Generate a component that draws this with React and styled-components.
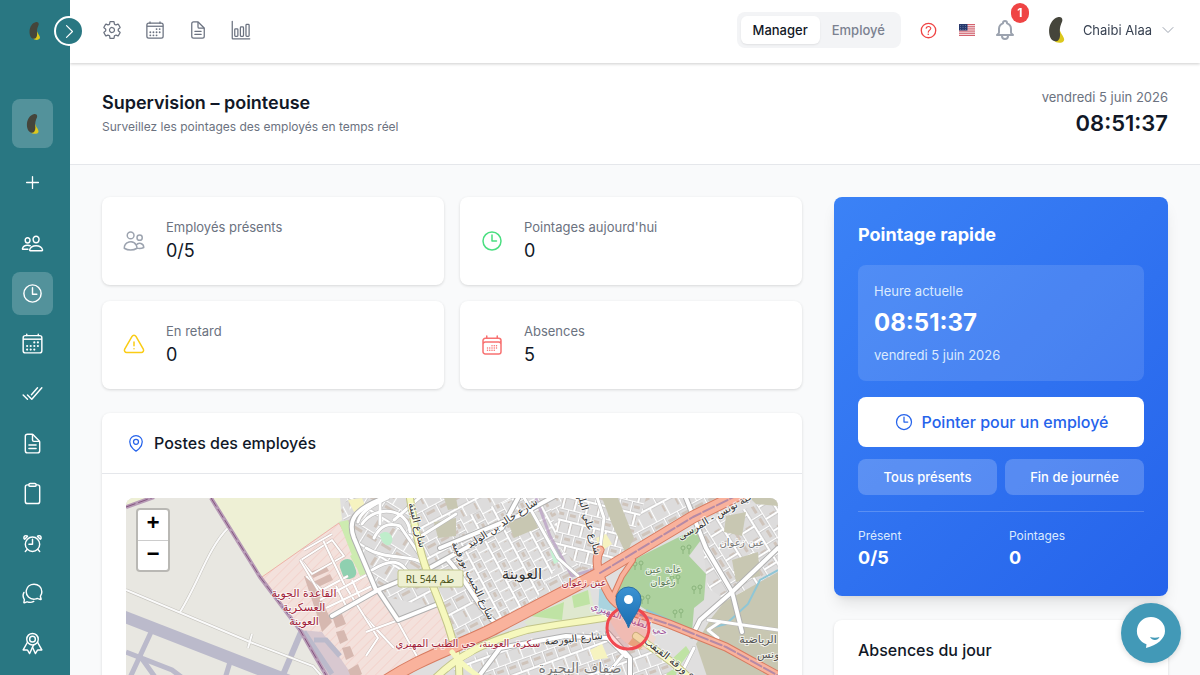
import React, { useState } from "react";
import styled, { createGlobalStyle } from "styled-components";
import {
  IoAlarmOutline,
  IoBarChartOutline,
  IoCalendarOutline,
  IoChatbubblesOutline,
  IoCheckmarkDoneOutline,
  IoClipboardOutline,
  IoDocumentTextOutline,
  IoHelpCircleOutline,
  IoPeopleOutline,
  IoRibbonOutline,
  IoSettingsOutline,
  IoTimeOutline,
  IoAddOutline,
} from "react-icons/io5";
import { HiOutlineBell } from "react-icons/hi";
import {
  HiOutlineCalendarDays,
  HiOutlineChevronDown,
  HiOutlineChevronRight,
  HiOutlineClock,
  HiOutlineExclamationTriangle,
  HiOutlineMapPin,
  HiOutlineUsers,
} from "react-icons/hi2";

const TIME = "08:51:37";
const DATE = "vendredi 5 juin 2026";

const sideLinks = [
  { label: "Présence", icon: IoTimeOutline, active: true },
  { label: "Calendrier", icon: IoCalendarOutline },
  { label: "Validations", icon: IoCheckmarkDoneOutline },
  { label: "Documents", icon: IoDocumentTextOutline },
  { label: "Tâches", icon: IoClipboardOutline },
  { label: "Rappels", icon: IoAlarmOutline },
  { label: "Messages", icon: IoChatbubblesOutline },
  { label: "Récompenses", icon: IoRibbonOutline },
];

const topLinks = [
  { label: "Paramètres", icon: IoSettingsOutline },
  { label: "Calendrier", icon: IoCalendarOutline },
  { label: "Documents", icon: IoDocumentTextOutline },
  { label: "Statistiques", icon: IoBarChartOutline },
];

const stats = [
  { label: "Employés présents", value: "0/5", icon: HiOutlineUsers, color: "#9ca3af" },
  { label: "Pointages aujourd'hui", value: "0", icon: HiOutlineClock, color: "#4ade80" },
  { label: "En retard", value: "0", icon: HiOutlineExclamationTriangle, color: "#facc15" },
  { label: "Absences", value: "5", icon: HiOutlineCalendarDays, color: "#f87171" },
];

const Seed = ({ height }) => (
  <svg width={height} height={height} viewBox="-15 0 76 76" aria-hidden="true">
    <path
      fill="#dcc81c"
      d="M29 40C29 52 26 64 15 69C20 78 42 78 44 67C44 57 36 53 31 38Z"
    />
    <path
      fill="#45453b"
      d="M25 1C34 -2 41 3 38 13C32 26 30 36 32 51C32 65 26 72 17 71C3 69 -1 51 0 36C2 19 12 4 25 1Z"
    />
  </svg>
);

const Flag = () => (
  <svg width="16" height="12" viewBox="0 0 32 24" role="img" aria-label="English">
    <rect width="32" height="24" rx="2" fill="#f7f0f1" />
    {[0, 1, 2, 3, 4, 5, 6].map((n) => (
      <rect key={n} y={n * 3.7} width="32" height="1.8" fill="#d0525f" />
    ))}
    <rect width="17" height="13" rx="1" fill="#26396c" />
    {[3, 8, 13].map((x) => (
      <g key={x} fill="#a9b4d0">
        <circle cx={x} cy="3" r="0.8" />
        <circle cx={x} cy="7" r="0.8" />
        <circle cx={x} cy="11" r="0.8" />
      </g>
    ))}
  </svg>
);

const TopBar = () => {
  const [mode, setMode] = useState("Manager");

  return (
    <Header>
      <IconRow>
        {topLinks.map(({ label, icon: Icon }) => (
          <TopIcon type="button" key={label} aria-label={label}>
            <Icon size={20} />
          </TopIcon>
        ))}
      </IconRow>
      <HeaderRight>
        <Toggle>
          {["Manager", "Employé"].map((name) => (
            <ToggleButton
              type="button"
              key={name}
              $on={mode === name}
              onClick={() => setMode(name)}
            >
              {name}
            </ToggleButton>
          ))}
        </Toggle>
        <Tool type="button" aria-label="Aide" $color="#ef4444">
          <IoHelpCircleOutline size={21} />
        </Tool>
        <Tool type="button" aria-label="Langue">
          <Flag />
        </Tool>
        <Tool type="button" aria-label="Notifications" $color="#9ca3af">
          <HiOutlineBell size={24} />
          <Badge>1</Badge>
        </Tool>
        <Profile type="button">
          <Avatar>
            <Seed height={26} />
          </Avatar>
          <span>Chaibi Alaa</span>
          <HiOutlineChevronDown size={16} color="#9ca3af" />
        </Profile>
      </HeaderRight>
    </Header>
  );
};

const SideBar = () => (
  <Side>
    <Brand>
      <Seed height={18} />
      <Expand type="button" aria-label="Ouvrir le menu">
        <HiOutlineChevronRight size={19} />
      </Expand>
    </Brand>
    <Nav>
      <SideLink href="#accueil" aria-label="Accueil" $active $tall>
        <Seed height={20} />
      </SideLink>
      <SideLink href="#ajouter" aria-label="Ajouter" $top={13}>
        <IoAddOutline size={21} />
      </SideLink>
      <SideLink href="#equipe" aria-label="Équipe" $top={18}>
        <IoPeopleOutline size={23} />
      </SideLink>
      {sideLinks.map(({ label, icon: Icon, active }) => (
        <SideLink
          key={label}
          href={"#" + label}
          aria-label={label}
          $active={active}
          $top={7}
        >
          <Icon size={23} />
        </SideLink>
      ))}
    </Nav>
  </Side>
);

// polygons of the built-up districts, each with the direction of its streets
const districts = [
  { id: "a", angle: -28, size: 15, points: "222,0 640,0 567,24 474,76 330,150 312,110 256,98 214,14" },
  { id: "f", angle: 32, size: 17, points: "222,0 284,0 300,74 252,92 228,40" },
  { id: "b", angle: 62, size: 11, points: "330,22 420,-12 436,60 412,98 372,126 346,104" },
  { id: "c", angle: 14, size: 12, points: "436,0 520,0 500,58 458,72 428,44" },
  { id: "d", angle: -20, size: 13, points: "330,166 380,146 470,132 530,150 570,200 320,200" },
  { id: "e", angle: 58, size: 14, points: "574,26 652,0 652,76 606,106 582,90" },
];

const trunk = "M250 190C290 160 340 146 371 129L474 75L567 19L626 -10";
const branch = "M474 52C466 66 476 84 484 98C496 116 520 116 548 128L600 149L660 182";
const yellow = [
  "M283 -6C290 40 296 62 303 78C314 106 326 132 333 168L334 200",
  "M300 190C330 156 360 144 401 132C430 126 456 124 482 119",
  "M510 138L547 165L572 188",
];

const streets = [
  "M258 0C226 12 222 24 228 40L250 92",
  "M206 118L252 92L300 72L376 30L392 0",
  "M252 92L272 122L312 106",
  "M322 62C340 80 356 118 374 128",
  "M314 50L392 18L440 -8",
  "M560 0L580 50L606 94L616 134",
  "M652 50L606 94L574 122L566 138",
  "M482 135L504 160L504 190",
  "M350 182L374 150L440 138L482 140L500 158",
];

const lanes = [
  "M262 0C240 10 234 16 232 24",
  "M236 26C250 6 282 10 284 34",
  "M248 40C254 28 262 24 274 28L296 60",
  "M240 50C262 64 292 54 300 70",
  "M246 72C266 60 276 62 284 78",
  "M254 2L254 26M268 22L300 -6M292 40L330 16",
  "M396 -4L432 60L452 78",
  "M470 -4L478 20L474 50",
  "M582 122L652 132",
  "M592 140L582 132L594 124",
  "M548 190L568 150",
  "M470 190L496 158",
];

const baseStreets = [
  "M175 62L206 42L218 58L186 76Z",
  "M180 78L196 92L222 78",
  "M196 40L218 86L238 118L268 150",
  "M174 62L192 92",
  "M206 36L178 52",
  "M238 118L252 140L240 158",
  "M262 106L294 164",
  "M240 134L300 112",
  "M194 102L246 74M200 110L250 86M210 88L222 112M226 82L236 104",
];

const trees = [
  [511, 66],
  [559, 50],
  [570, 90],
  [551, 114],
  [518, 100],
  [548, 80],
];

const airLines =
  "M0 92L124 144L187 168L206 190M102 30C82 50 72 86 54 114M126 136L122 150";
const fence = "M0 9L28 -1M85 0L134 79L174 132L204 184";

const PlaceMap = () => (
  <MapSvg viewBox="0 0 652 352" preserveAspectRatio="xMidYMin slice">
    <defs>
      {districts.map(({ id, angle, size }) => (
        <pattern
          key={id}
          id={"grid-" + id}
          width={size}
          height={size * 2}
          patternUnits="userSpaceOnUse"
          patternTransform={"rotate(" + angle + ")"}
        >
          <rect width={size} height={size * 2} fill="#dddcdc" />
          <path
            d={`M3 4h${size - 6}v3H3zM4 ${size + 3}h4v${size - 8}H4z`}
            fill="#cfc4bb"
          />
          <path
            d={`M0 0H${size}M0 ${size}H${size}M0 0V${size}M${size / 2} ${size}V${size * 2}`}
            stroke="#bdbdbd"
            strokeWidth="3"
          />
          <path
            d={`M0 0H${size}M0 ${size}H${size}M0 0V${size}M${size / 2} ${size}V${size * 2}`}
            stroke="#fff"
            strokeWidth="2"
          />
        </pattern>
      ))}
      <pattern
        id="hatch"
        width="7"
        height="7"
        patternUnits="userSpaceOnUse"
        patternTransform="rotate(45)"
      >
        <rect width="7" height="7" fill="#f3e1dc" />
        <path d="M0 0V7" stroke="#f3cfc9" strokeWidth="1.5" />
      </pattern>
      <linearGradient id="pin" x1="0" y1="0" x2="0" y2="1">
        <stop offset="0" stopColor="#3b93d3" />
        <stop offset="1" stopColor="#1a6cb0" />
      </linearGradient>
    </defs>

    <rect width="652" height="352" fill="#e0dfdf" />
    {districts.map(({ id, points }) => (
      <polygon key={id} points={points} fill={`url(#grid-${id})`} />
    ))}

    <path d="M0 0H85L136 80L175 132L212 200V352H0Z" fill="#e8e7e1" />
    <path d="M0 0H28L0 9Z" fill="#eef0d5" />
    <path d="M85 0H214L216 22L136 79Z" fill="#eef0d5" />
    <path
      d="M136 79L213 25L252 96L271 122L312 107L326 140L260 178V352H212V196L175 132Z"
      fill="url(#hatch)"
      stroke="#f0b3a6"
    />
    <path d="M175 132L196 134L226 177H200Z" fill="#d8c8d0" />
    <path d="M213 24L222 22L240 76L234 78Z M224 58L230 54L240 72L234 76Z" fill="#cdebb0" />
    <rect x="215" y="61" width="14" height="20" rx="6" fill="#8fd0b0" transform="rotate(-20 222 71)" />
    <g fill="#d6b8b0">
      <path d="M184 74L200 68L203 73L187 80Z" />
      <path d="M187 84L204 76L207 82L190 90Z" />
      <path d="M178 78L184 78L206 124L196 134L192 120Z" />
      <path d="M206 118L216 116L220 126L210 130Z" />
      <path d="M210 134L218 132L222 142L214 146Z" />
      <path d="M216 150L224 148L228 158L220 162Z" />
      <path d="M222 172L232 166L236 176L226 182Z" />
    </g>
    {baseStreets.map((d) => (
      <g key={d} fill="none" strokeLinejoin="round">
        <path d={d} stroke="#cdbcb8" strokeWidth="3" />
        <path d={d} stroke="#fff" strokeWidth="2" />
      </g>
    ))}

    <g fill="#c8c7b2">
      <path d="M308 24L330 20L330 38L312 40Z" />
      <path d="M318 0H330L332 10L322 12Z" />
      <path d="M382 24L406 14L412 30L388 40Z" />
      <path d="M476 0H492L508 40L500 56L486 26Z" />
      <path d="M600 18L620 14L616 38L598 34Z" />
      <path d="M624 0H652V8L630 6Z" />
      <path d="M606 62L632 54L634 78L610 84Z" />
      <path d="M598 104L652 74V352H640L570 146L584 122Z" />
    </g>
    <path d="M254 36C262 30 268 38 266 44C262 52 254 44 254 36Z" fill="#bfedcb" />
    <path d="M424 52L432 50L436 62L428 66Z" fill="#c6f2d4" />
    <path d="M470 40L480 36L486 46L474 54Z" fill="#f6f3c0" />
    <path d="M222 2L236 0L240 10L228 14Z" fill="#f6f3c0" />
    <path d="M398 124L446 98L464 92L470 118L404 130Z" fill="#dfe8cf" />
    <path d="M404 118L438 104L436 122Z M446 98L462 92L464 106L448 110Z" fill="#bfe3a4" />
    <path
      d="M507 62L571 30L575 42L563 58L580 76L578 102L568 110L566 134L528 117L500 99L487 96Z"
      fill="#add19e"
    />
    <path d="M474 78L486 96L498 112L490 124L472 116Z" fill="#aad3df" />
    <path d="M547 160L560 148L564 154L552 170Z M540 176L552 168L548 186Z" fill="#bfe3a4" />
    <path d="M464 152L476 146L482 160L468 162Z" fill="#f6f3c0" />
    <path d="M478 112C494 140 496 150 524 152L530 140L508 116Z" fill="#f0d9cf" />
    <path d="M508 138L520 144L514 152L502 146Z" fill="#e8b98a" />
    {trees.map(([x, y]) => (
      <g key={x} fill="none" stroke="#8ab47c">
        <circle cx={x - 2} cy={y} r="2" />
        <circle cx={x + 4} cy={y - 1} r="2" />
        <path d={`M${x - 2} ${y + 2}v4M${x + 4} ${y + 1}v5`} />
      </g>
    ))}

    <g stroke="#bbbacb" fill="none">
      <path d="M-6 117L166 184" strokeWidth="12" />
      <path d="M26 132L2 184M0 154L46 172L70 190M14 158L34 186" strokeWidth="5" />
      <path d="M176 132L154 184" strokeWidth="6" />
      <path d="M178 134L206 176M188 142L200 142L214 158" strokeWidth="5" />
      <path d="M104 164L98 184" strokeWidth="5" />
    </g>
    <g fill="none">
      <path d={airLines} stroke="#c4c2bc" strokeWidth="3" />
      <path d={airLines} stroke="#fafafa" strokeWidth="2" />
      <path d={fence} stroke="#b79bb6" strokeWidth="4" />
      <path d={fence} stroke="#84557f" strokeWidth="1" strokeDasharray="10 3" />
      <path d="M410 0L424 38L446 78L500 62" stroke="#b79bc2" strokeWidth="3" opacity="0.7" />
      <path d="M652 72L634 82L622 106L600 126L584 130M520 112L566 132" stroke="#8fc6d6" strokeWidth="2" />
    </g>

    <g fill="none" strokeLinecap="round" strokeLinejoin="round">
      {lanes.map((d) => (
        <path key={d} d={d} stroke="#b8b8b8" strokeWidth="4" />
      ))}
      {streets.map((d) => (
        <path key={d} d={d} stroke="#b0b0b0" strokeWidth="6" />
      ))}
      {lanes.map((d) => (
        <path key={d} d={d} stroke="#fff" strokeWidth="3" />
      ))}
      {streets.map((d) => (
        <path key={d} d={d} stroke="#fff" strokeWidth="4" />
      ))}
      {yellow.map((d) => (
        <path key={d} d={d} stroke="#c2c48a" strokeWidth="8" />
      ))}
      {yellow.map((d) => (
        <path key={d} d={d} stroke="#f6f8bd" strokeWidth="6" />
      ))}
      <path d={branch} stroke="#d77b60" strokeWidth="9" />
      <path d="M487 98L496 78L507 62" stroke="#d77b60" strokeWidth="6" />
      <path d={trunk} stroke="#d77b60" strokeWidth="13" />
      <path d={branch} stroke="#f9b29c" strokeWidth="7" />
      <path d="M487 98L496 78L507 62" stroke="#f9b29c" strokeWidth="4" />
      <path d={trunk} stroke="#f9b29c" strokeWidth="11" />
      <path
        d="M474 75L567 19L626 -10M500 112L548 128L600 149L660 182"
        stroke="#b58aa6"
        strokeWidth="2"
        strokeDasharray="12 3"
      />
      <path
        d="M322 170C332 158 346 158 350 150M326 154C334 166 344 172 352 178"
        stroke="#f6f8bd"
        strokeWidth="5"
      />
    </g>

    <Place x="178" y="99" $color="#a01c38" $size={11}>القاعدة الجوية</Place>
    <Place x="178" y="113" $color="#a01c38" $size={11}>العسكرية</Place>
    <Place x="178" y="127" $color="#a01c38" $size={11}>العوينة</Place>
    <rect x="272" y="72" width="65" height="17" rx="2" fill="#eef0d2" stroke="#c0c48c" />
    <RoadRef x="304" y="85">RL 544 طم</RoadRef>
    <Place x="396" y="81" $color="#333" $size={15}>العوينة</Place>
    <Place x="458" y="88" $color="#a01c38" $size={10}>عين زغوان</Place>
    <Place x="616" y="48" $color="#777" $size={10}>عين زغوان</Place>
    <Place x="537" y="75" $color="#5c7a58" $size={10}>غابة عين</Place>
    <Place x="537" y="87" $color="#5c7a58" $size={10}>زغوان</Place>
    <Place x="342" y="149" $color="#a01c38" $size={10}>سكرة، العوينة، حي الطيب المهيري</Place>
    <Place x="454" y="175" $color="#777" $size={14}>ضفاف البحيرة</Place>
    <Place x="632" y="145" $color="#555" $size={11}>الرياضية</Place>
    <Place x="644" y="160" $color="#555" $size={11}>تونس</Place>
    <Place transform="translate(378 28) rotate(-33)" $color="#333" $size={10}>شارع خالد بن الوليد</Place>
    <Place transform="translate(288 28) rotate(76)" $color="#333" $size={10}>شارع البيئة</Place>
    <Place transform="translate(344 84) rotate(64)" $color="#333" $size={10}>شارع الحبيب بورقيبة</Place>
    <Place transform="translate(458 20) rotate(74)" $color="#333" $size={10}>شارع علي البلهوان</Place>
    <Place transform="translate(596 18) rotate(-30)" $color="#333" $size={10}>ضاحية تونس - المرسى</Place>
    <Place transform="translate(448 144) rotate(-6)" $color="#333" $size={10}>شارع البورصة</Place>
    <Place transform="translate(548 168) rotate(38)" $color="#333" $size={10}>شارع ورقة القيقب</Place>
    <Place transform="translate(502 124) rotate(20)" $color="#a0569a" $size={10}>حي الطيب المهيري</Place>

    <circle cx="502" cy="130" r="21" fill="#ef4444" fillOpacity="0.2" stroke="#f04850" strokeWidth="3" />
    <path
      d="M502.500 130C500 121 490 112 490 101.500A12.500 12.500 0 0 1 515 101.500C515 112 505 121 502.500 130Z"
      fill="url(#pin)"
      stroke="#2a6ea6"
    />
    <circle cx="502.500" cy="101.500" r="4.500" fill="#fff" />
  </MapSvg>
);

const App = () => {
  return (
    <>
      <GlobalStyle />
      <Page>
        <SideBar />
        <Main>
          <TopBar />
          <TitleBar>
            <div>
              <PageTitle>Supervision – pointeuse</PageTitle>
              <Subtitle>Surveillez les pointages des employés en temps réel</Subtitle>
            </div>
            <Now>
              <NowDate>{DATE}</NowDate>
              <NowTime>{TIME}</NowTime>
            </Now>
          </TitleBar>
          <Content>
            <Column>
              <StatGrid>
                {stats.map(({ label, value, icon: Icon, color }) => (
                  <StatCard key={label}>
                    <Icon size={24} color={color} />
                    <div>
                      <StatLabel>{label}</StatLabel>
                      <StatValue>{value}</StatValue>
                    </div>
                  </StatCard>
                ))}
              </StatGrid>
              <Card>
                <CardHead>
                  <HiOutlineMapPin size={20} color="#2563eb" />
                  <CardTitle>Postes des employés</CardTitle>
                </CardHead>
                <CardBody>
                  <MapFrame>
                    <PlaceMap />
                    <ZoomControl>
                      <button type="button" aria-label="Zoom avant">+</button>
                      <button type="button" aria-label="Zoom arrière">−</button>
                    </ZoomControl>
                  </MapFrame>
                </CardBody>
              </Card>
            </Column>
            <Column>
              <Quick>
                <QuickTitle>Pointage rapide</QuickTitle>
                <QuickBox>
                  <QuickText>Heure actuelle</QuickText>
                  <QuickTime>{TIME}</QuickTime>
                  <QuickText>{DATE}</QuickText>
                </QuickBox>
                <PunchButton type="button">
                  <HiOutlineClock size={20} />
                  Pointer pour un employé
                </PunchButton>
                <QuickActions>
                  <QuickButton type="button">Tous présents</QuickButton>
                  <QuickButton type="button">Fin de journée</QuickButton>
                </QuickActions>
                <QuickStats>
                  <div>
                    <QuickLabel>Présent</QuickLabel>
                    <QuickValue>0/5</QuickValue>
                  </div>
                  <div>
                    <QuickLabel>Pointages</QuickLabel>
                    <QuickValue>0</QuickValue>
                  </div>
                </QuickStats>
              </Quick>
              <Card>
                <CardHead>
                  <CardTitle>Absences du jour</CardTitle>
                </CardHead>
                <CardBody>
                  <Subtitle>5</Subtitle>
                </CardBody>
              </Card>
            </Column>
          </Content>
        </Main>
        <ChatButton type="button" aria-label="Chat">
          <svg width="32" height="34" viewBox="0 0 32 34" aria-hidden="true">
            <path
              fill="#fff"
              d="M16 1A14 14 0 0 1 30 15C30 23 22 29 11 32L11.500 28.300A14 14 0 0 1 16 1Z"
            />
            <path fill="#4299b7" d="M15 21C18 22 22 22 24.500 21C23 25 17 25 15 21Z" />
          </svg>
        </ChatButton>
      </Page>
    </>
  );
};

const GlobalStyle = createGlobalStyle`
  * {
    box-sizing: border-box;
  }
  body {
    margin: 0;
    background: #f9fafb;
    color: #111827;
    font-family: Inter, "Noto Sans", sans-serif;
  }
  h1, h2, p {
    margin: 0;
  }
  button {
    padding: 0;
    border: 0;
    background: none;
    color: inherit;
    font: inherit;
    cursor: pointer;
  }
  svg {
    flex-shrink: 0;
  }
`;

const Page = styled.div`
  display: flex;
  height: 100vh;
`;

const Side = styled.aside`
  width: 70px;
  flex-shrink: 0;
  background: #297782;
  color: #fff;
`;

const Brand = styled.div`
  position: relative;
  display: flex;
  align-items: center;
  justify-content: center;
  height: 62px;
`;

const Expand = styled.button`
  position: absolute;
  right: -14px;
  z-index: 2;
  display: flex;
  align-items: center;
  justify-content: center;
  width: 30px;
  height: 30px;
  border: 2px solid #fff;
  border-radius: 50%;
  background: #297782;
`;

const Nav = styled.nav`
  padding: 37px 17px 0 12px;
`;

const SideLink = styled.a`
  display: flex;
  align-items: center;
  justify-content: center;
  height: ${(props) => (props.$tall ? 49 : 43)}px;
  margin-top: ${(props) => props.$top || 0}px;
  border-radius: 8px;
  background: ${(props) => (props.$active ? "rgba(255, 255, 255, 0.2)" : "none")};
  color: #fff;
`;

const Main = styled.main`
  flex: 1;
  min-width: 0;
  overflow: auto;
  scrollbar-width: none;
`;

const Header = styled.header`
  position: sticky;
  top: 0;
  z-index: 1;
  display: flex;
  align-items: center;
  justify-content: space-between;
  height: 63px;
  padding: 0 24px 3px;
  background: #fff;
  box-shadow: 0 1px 3px rgba(0, 0, 0, 0.2);
`;

const IconRow = styled.div`
  display: flex;
  gap: 8px;
`;

const TopIcon = styled.button`
  display: flex;
  align-items: center;
  justify-content: center;
  width: 35px;
  height: 35px;
  color: #6b7280;
`;

const HeaderRight = styled.div`
  display: flex;
  align-items: center;
  gap: 14px;
  font-size: 13px;
`;

const Toggle = styled.div`
  display: flex;
  padding: 4px;
  margin-right: 2px;
  border-radius: 8px;
  background: #f3f4f6;
`;

const ToggleButton = styled.button`
  padding: 0 12px;
  border-radius: 6px;
  background: ${(props) => (props.$on ? "#fff" : "none")};
  box-shadow: ${(props) => (props.$on ? "0 1px 2px rgba(0, 0, 0, 0.08)" : "none")};
  color: ${(props) => (props.$on ? "#111827" : "#7b8190")};
  font-weight: 500;
  line-height: 28px;
`;

const Tool = styled.button`
  position: relative;
  display: flex;
  align-items: center;
  justify-content: center;
  width: 24px;
  height: 24px;
  color: ${(props) => props.$color || "inherit"};
`;

const Badge = styled.span`
  position: absolute;
  top: -15px;
  right: -12px;
  width: 18px;
  border-radius: 9px;
  background: #ef4444;
  color: #fff;
  font-size: 12px;
  font-weight: 700;
  line-height: 20px;
`;

const Profile = styled.button`
  display: flex;
  align-items: center;
  gap: 8px;
  margin-left: 8px;
  color: #374151;
`;

const Avatar = styled.span`
  display: flex;
  justify-content: center;
  width: 36px;
`;

const TitleBar = styled.section`
  display: flex;
  align-items: center;
  justify-content: space-between;
  padding: 24px 32px 25px;
  border-bottom: 1px solid #e5e7eb;
  background: #fff;
`;

const PageTitle = styled.h1`
  font-size: 18px;
  font-weight: 600;
  line-height: 28px;
`;

const Subtitle = styled.p`
  color: #6b7280;
  font-size: 12px;
  line-height: 20px;
`;

const Now = styled.div`
  text-align: right;
`;

const NowDate = styled.p`
  color: #6b7280;
  font-size: 13px;
  line-height: 20px;
`;

const NowTime = styled.p`
  font-size: 22px;
  font-weight: 600;
  line-height: 32px;
`;

const Content = styled.div`
  display: grid;
  grid-template-columns: repeat(3, minmax(0, 1fr));
  gap: 32px;
  padding: 32px;

  > :first-child {
    grid-column: span 2;
  }
`;

const Column = styled.div`
  display: flex;
  flex-direction: column;
  gap: 24px;
`;

const StatGrid = styled.div`
  display: grid;
  grid-template-columns: 1fr 1fr;
  gap: 16px;
`;

const Card = styled.section`
  border-radius: 8px;
  background: #fff;
  box-shadow: 0 1px 3px rgba(0, 0, 0, 0.14);
`;

const StatCard = styled(Card)`
  display: flex;
  align-items: center;
  gap: 20px;
  padding: 20px;
`;

const StatLabel = styled.p`
  color: #6b7280;
  font-size: 13px;
  line-height: 20px;
`;

const StatValue = styled.p`
  font-size: 18px;
  line-height: 28px;
`;

const CardHead = styled.div`
  display: flex;
  align-items: center;
  gap: 8px;
  padding: 16px 24px;
  border-bottom: 1px solid #e5e7eb;
`;

const CardTitle = styled.h2`
  font-size: 16px;
  font-weight: 500;
  line-height: 28px;
`;

const CardBody = styled.div`
  padding: 24px;
`;

const MapFrame = styled.div`
  position: relative;
  overflow: hidden;
  border-radius: 8px;
`;

const MapSvg = styled.svg`
  display: block;
  width: 100%;
  height: 352px;
`;

const Place = styled.text`
  fill: ${(props) => props.$color};
  stroke: rgba(255, 255, 255, 0.7);
  stroke-width: 2px;
  paint-order: stroke;
  font-family: "DejaVu Sans", "Noto Sans", sans-serif;
  font-size: ${(props) => props.$size}px;
  text-anchor: middle;
`;

const RoadRef = styled.text`
  fill: #4d5620;
  font-family: "Noto Sans", "DejaVu Sans", sans-serif;
  font-size: 10px;
  text-anchor: middle;
`;

const ZoomControl = styled.div`
  position: absolute;
  top: 10px;
  left: 10px;
  border: 2px solid rgba(0, 0, 0, 0.2);
  border-radius: 4px;
  background: #fff;
  background-clip: padding-box;

  button {
    display: block;
    width: 30px;
    height: 30px;
    color: #000;
    font-family: "Liberation Mono", monospace;
    font-size: 22px;
    font-weight: 700;
    line-height: 30px;
  }
  button + button {
    border-top: 1px solid #ccc;
  }
`;

const Quick = styled.section`
  padding: 24px;
  border-radius: 8px;
  background: linear-gradient(135deg, #3b82f6, #2563eb);
  box-shadow: 0 10px 15px -3px rgba(0, 0, 0, 0.1), 0 4px 6px -4px rgba(0, 0, 0, 0.1);
  color: #fff;
`;

const QuickTitle = styled.h2`
  margin-bottom: 16px;
  font-size: 18px;
  font-weight: 700;
  line-height: 28px;
`;

const QuickBox = styled.div`
  display: flex;
  flex-direction: column;
  gap: 4px;
  padding: 16px;
  margin-bottom: 16px;
  border-radius: 8px;
  background: rgba(255, 255, 255, 0.12);
`;

const QuickText = styled.p`
  color: #dbeafe;
  font-size: 13px;
  line-height: 20px;
`;

const QuickTime = styled.p`
  font-size: 24px;
  font-weight: 700;
  line-height: 36px;
`;

const PunchButton = styled.button`
  display: flex;
  align-items: center;
  justify-content: center;
  gap: 8px;
  width: 100%;
  height: 50px;
  margin-bottom: 12px;
  border-radius: 8px;
  background: #fff;
  color: #2563eb;
  font-size: 16px;
  font-weight: 500;
`;

const QuickActions = styled.div`
  display: grid;
  grid-template-columns: 1fr 1fr;
  gap: 8px;
  padding-bottom: 16px;
  border-bottom: 1px solid rgba(255, 255, 255, 0.2);
`;

const QuickButton = styled.button`
  border-radius: 8px;
  background: rgba(255, 255, 255, 0.2);
  font-size: 13px;
  font-weight: 500;
  line-height: 36px;
`;

const QuickStats = styled.div`
  display: grid;
  grid-template-columns: 1fr 1fr;
  gap: 16px;
  padding-top: 16px;
`;

const QuickLabel = styled.p`
  color: #dbeafe;
  font-size: 12px;
  line-height: 16px;
`;

const QuickValue = styled.p`
  font-size: 18px;
  font-weight: 700;
  line-height: 28px;
`;

const ChatButton = styled.button`
  position: fixed;
  right: 19px;
  bottom: 12px;
  display: flex;
  align-items: center;
  justify-content: center;
  width: 60px;
  height: 60px;
  border-radius: 50%;
  background: #4299b7;
  box-shadow: 0 1px 6px rgba(0, 0, 0, 0.15);
`;

export default App;
